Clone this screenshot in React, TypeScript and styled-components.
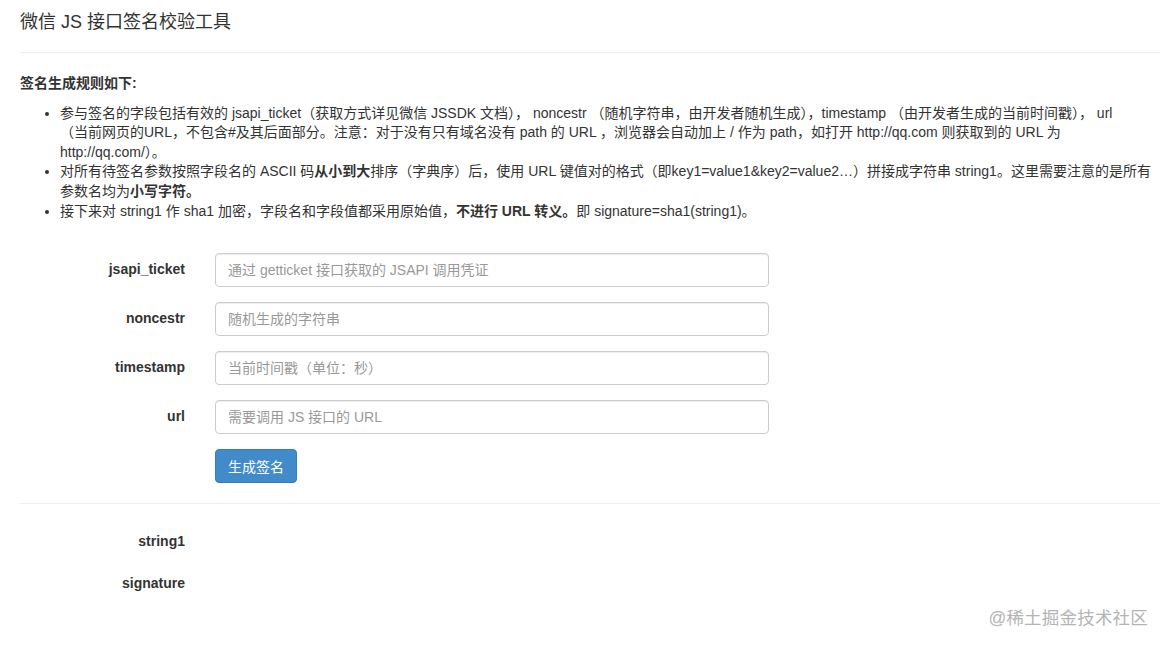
import React from "react";
import styled, { createGlobalStyle } from "styled-components";

const GlobalStyle = createGlobalStyle`
  html, body {
    margin: 0;
    padding: 0;
    background: #fff;
  }
  body {
    font-family: "Liberation Sans", Arial, "Noto Sans CJK SC", sans-serif;
    font-size: 14px;
    line-height: 1.4;
    color: #333;
  }
  * {
    box-sizing: border-box;
  }
`;

const Page = styled.div`
  position: relative;
  padding: 0 8px 0 20px;
  min-height: 648px;
`;

const Title = styled.h1`
  margin: 0;
  padding-top: 12px;
  font-size: 18px;
  font-weight: normal;
  line-height: 20px;
  color: #333;
`;

const Divider = styled.hr<{ $top?: number; $bottom?: number }>`
  border: 0;
  border-top: 1px solid #eee;
  margin: ${({ $top = 0 }) => $top}px 0 ${({ $bottom = 0 }) => $bottom}px;
`;

const RulesHeading = styled.p`
  margin: 0;
  font-weight: bold;
  line-height: 19.6px;
`;

const RuleList = styled.ul`
  margin: 10px 0 0;
  padding-left: 40px;
  line-height: 19.6px;
`;

const Form = styled.div`
  display: flex;
  flex-direction: column;
  gap: 15px;
  margin-top: 32px;
`;

const Row = styled.div<{ $height?: number }>`
  display: grid;
  grid-template-columns: 165px 554px;
  column-gap: 30px;
  align-items: center;
  height: ${({ $height = 34 }) => $height}px;
`;

const Label = styled.label`
  text-align: right;
  font-weight: bold;
  font-size: 14px;
  color: #333;
`;

const Input = styled.input`
  width: 100%;
  height: 34px;
  padding: 6px 12px;
  font-family: inherit;
  font-size: 14px;
  color: #555;
  background: #fff;
  border: 1px solid #ccc;
  border-radius: 4px;
  box-shadow: inset 0 1px 1px rgba(0, 0, 0, 0.075);
  outline: none;

  &::placeholder {
    color: #999;
  }
`;

const Button = styled.button`
  justify-self: start;
  height: 34px;
  padding: 6px 12px;
  font-family: inherit;
  font-size: 14px;
  color: #fff;
  background: #428bca;
  border: 1px solid #357ebd;
  border-radius: 4px;
  cursor: pointer;
`;

const Results = styled.div`
  display: flex;
  flex-direction: column;
  padding-top: 17px;
`;

const Watermark = styled.div`
  position: absolute;
  right: 20px;
  top: 606px;
  font-size: 17.5px;
  line-height: 24px;
  color: #b4b4b4;
  letter-spacing: 0.2px;
`;

const fields = [
  { name: "jsapi_ticket", placeholder: "通过 getticket 接口获取的 JSAPI 调用凭证" },
  { name: "noncestr", placeholder: "随机生成的字符串" },
  { name: "timestamp", placeholder: "当前时间戳（单位：秒）" },
  { name: "url", placeholder: "需要调用 JS 接口的 URL" },
];

export default function App() {
  return (
    <>
      <GlobalStyle />
      <Page>
        <Title>微信 JS 接口签名校验工具</Title>
        <Divider $top={20} $bottom={21} />
        <RulesHeading>签名生成规则如下:</RulesHeading>
        <RuleList>
          <li>
            参与签名的字段包括有效的 jsapi_ticket（获取方式详见微信 JSSDK 文档）， noncestr
            （随机字符串，由开发者随机生成），timestamp （由开发者生成的当前时间戳）， url
            <br />
            （当前网页的URL，不包含#及其后面部分。注意：对于没有只有域名没有 path 的 URL ，浏览器会自动加上 / 作为 path，如打开 http://qq.com 则获取到的 URL 为
            <br />
            http://qq.com/）。
          </li>
          <li>
            对所有待签名参数按照字段名的 ASCII 码<b>从小到大</b>排序（字典序）后，使用 URL
            键值对的格式（即key1=value1&amp;key2=value2…）拼接成字符串 string1。这里需要注意的是所有参数名均为<b>小写字符。</b>
          </li>
          <li>
            接下来对 string1 作 sha1 加密，字段名和字段值都采用原始值，<b>不进行 URL 转义。</b>即
            signature=sha1(string1)。
          </li>
        </RuleList>
        <Form>
          {fields.map((f) => (
            <Row key={f.name}>
              <Label>{f.name}</Label>
              <Input placeholder={f.placeholder} />
            </Row>
          ))}
          <Row>
            <span />
            <Button>生成签名</Button>
          </Row>
        </Form>
        <Divider $top={20} />
        <Results>
          <Row $height={42}>
            <Label>string1</Label>
            <span />
          </Row>
          <Row $height={42}>
            <Label>signature</Label>
            <span />
          </Row>
        </Results>
        <Watermark>@稀土掘金技术社区</Watermark>
      </Page>
    </>
  );
}
